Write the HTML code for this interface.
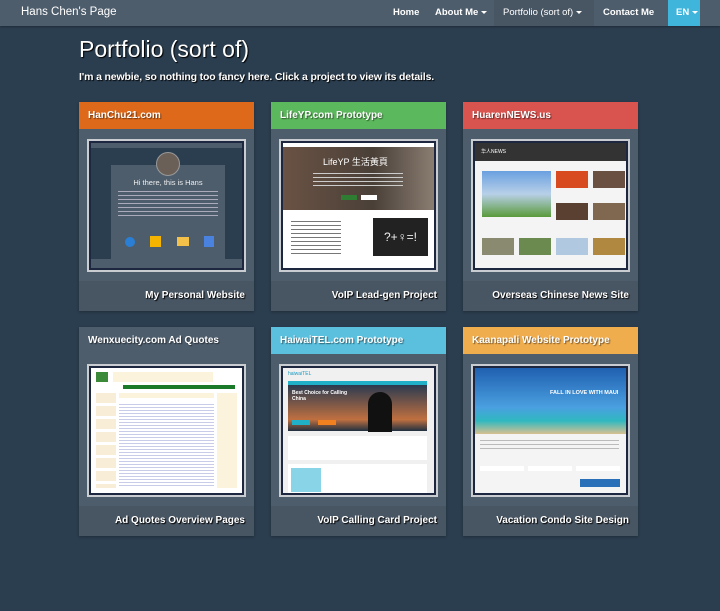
<!DOCTYPE html>
<html><head><meta charset="utf-8">
<style>
*{box-sizing:border-box;margin:0;padding:0}
body{width:720px;height:611px;background:#2b3e50;font-family:"Liberation Sans","Noto Sans CJK SC",sans-serif;color:#ebebeb;position:relative;overflow:hidden}
.nav{position:absolute;left:0;top:0;width:720px;height:26px;background:#4e5d6c;box-shadow:0 1px 2px rgba(0,0,0,.3)}
.brand{position:absolute;left:21px;top:6px;font-size:11.5px;color:#fff}
.ni{position:absolute;top:0;height:26px;line-height:25px;font-size:9.5px;color:#fff;font-weight:bold}
.car{display:inline-block;border-left:3px solid transparent;border-right:3px solid transparent;border-top:3px solid #fff;vertical-align:middle;margin-left:3px}
h1{position:absolute;left:79px;top:36px;font-size:23px;font-weight:normal;color:#fff;text-shadow:1px 1px 1px #000}
.sub{position:absolute;left:79px;top:71px;font-size:10.5px;letter-spacing:-0.15px;font-weight:bold;color:#fff;text-shadow:1px 1px 1px #000}
.card{position:absolute;width:175px;height:209px;background:#4e5d6c;box-shadow:0 1px 3px rgba(0,0,0,.3)}
.hd{height:27px;line-height:27px;padding-left:9px;font-size:10px;font-weight:bold;color:#fff;text-shadow:1px 1px 1px rgba(0,0,0,.5)}
.ft{position:absolute;left:0;bottom:0;width:175px;height:30px;background:#485563;text-align:right;padding-right:9px;line-height:30px;font-size:10px;font-weight:bold;color:#fff;text-shadow:1px 1px 1px #000}
.th{position:absolute;left:8px;top:37px;width:159px;height:133px;border:2px solid #c9cdd2;background:#1d2740;padding:2px;overflow:hidden}
.in{width:100%;height:100%;position:relative;overflow:hidden}
.a{position:absolute}
</style></head><body>
<div class="nav">
<div class="brand">Hans Chen's Page</div>
<div class="ni" style="left:393px">Home</div>
<div class="ni" style="left:435px">About Me<span class="car"></span></div>
<div class="ni" style="left:494px;width:100px;background:#485563;padding-left:9px;font-weight:normal">Portfolio (sort of)<span class="car"></span></div>
<div class="ni" style="left:603px">Contact Me</div>
<div class="ni" style="left:668px;width:32px;background:#3fb5dc;padding-left:8px">EN<span class="car"></span></div>
</div>
<h1>Portfolio (sort of)</h1>
<div class="sub">I'm a newbie, so nothing too fancy here. Click a project to view its details.</div>

<div class="card" style="left:79px;top:102px"><div class="hd" style="background:#df691a">HanChu21.com</div>
<div class="th"><div class="in" style="background:#2b3e50">
<div class="a" style="left:0;top:0;width:100%;height:5px;background:#4e5d6c"></div>
<div class="a" style="left:20px;top:22px;width:114px;height:94px;background:#4e5d6c"></div>
<div class="a" style="left:65px;top:9px;width:24px;height:24px;border-radius:50%;background:#6a6058;border:1px solid #999"></div>
<div class="a" style="left:22px;top:35px;width:110px;text-align:center;font-size:7.5px;color:#eee">Hi there, this is Hans</div>
<div class="a" style="left:27px;top:48px;width:100px;height:28px;background:repeating-linear-gradient(#aab 0 1px,transparent 1px 4px)"></div>
<div class="a" style="left:34px;top:94px;width:10px;height:10px;border-radius:50%;background:#2a7fd4"></div>
<div class="a" style="left:59px;top:93px;width:11px;height:11px;background:#f5b400"></div>
<div class="a" style="left:86px;top:94px;width:12px;height:9px;background:#f3c04a"></div>
<div class="a" style="left:113px;top:93px;width:10px;height:11px;background:#4a82e0"></div>
<div class="a" style="left:0;bottom:0;width:100%;height:9px;background:#4e5d6c"></div>
</div></div>
<div class="ft">My Personal Website</div></div>

<div class="card" style="left:271px;top:102px"><div class="hd" style="background:#5cb85c">LifeYP.com Prototype</div>
<div class="th"><div class="in" style="background:#fff">
<div class="a" style="left:0;top:4px;width:100%;height:63px;background:linear-gradient(90deg,#6a5244,#4a4038 60%,#8a7d72)"></div>
<div class="a" style="left:40px;top:12px;font-size:9px;color:#fff">LifeYP 生活黃頁</div>
<div class="a" style="left:30px;top:30px;width:90px;height:14px;background:repeating-linear-gradient(#ccc 0 1px,transparent 1px 4px)"></div>
<div class="a" style="left:58px;top:52px;width:16px;height:5px;background:#2e7d32"></div>
<div class="a" style="left:78px;top:52px;width:16px;height:5px;background:#fff"></div>
<div class="a" style="left:8px;top:78px;width:50px;height:35px;background:repeating-linear-gradient(#777 0 1px,transparent 1px 4px)"></div>
<div class="a" style="left:90px;top:75px;width:55px;height:38px;background:#222;color:#eee;font-size:12px;text-align:center;line-height:38px">?+♀=!</div>
</div></div>
<div class="ft">VoIP Lead-gen Project</div></div>

<div class="card" style="left:463px;top:102px"><div class="hd" style="background:#d9534f">HuarenNEWS.us</div>
<div class="th"><div class="in" style="background:#f4f4f4">
<div class="a" style="left:0;top:0;width:100%;height:18px;background:#333;color:#fff;font-size:5px;padding:5px 6px">华人NEWS</div>
<div class="a" style="left:7px;top:28px;width:69px;height:46px;background:linear-gradient(#6aa0e0,#b8d0e8 50%,#5a9a3a)"></div>
<div class="a" style="left:81px;top:28px;width:32px;height:17px;background:#d84a20"></div>
<div class="a" style="left:118px;top:28px;width:32px;height:17px;background:#6a5040"></div>
<div class="a" style="left:81px;top:60px;width:32px;height:17px;background:#5a4030"></div>
<div class="a" style="left:118px;top:60px;width:32px;height:17px;background:#806850"></div>
<div class="a" style="left:7px;top:95px;width:32px;height:17px;background:#8a8a70"></div>
<div class="a" style="left:44px;top:95px;width:32px;height:17px;background:#6a8a50"></div>
<div class="a" style="left:81px;top:95px;width:32px;height:17px;background:#b0c8e0"></div>
<div class="a" style="left:118px;top:95px;width:32px;height:17px;background:#b08840"></div>
</div></div>
<div class="ft">Overseas Chinese News Site</div></div>

<div class="card" style="left:79px;top:327px"><div class="hd" style="background:#4e5d6c">Wenxuecity.com Ad Quotes</div>
<div class="th"><div class="in" style="background:#fff">
<div class="a" style="left:22px;top:4px;width:100px;height:10px;background:#fbf3dc"></div>
<div class="a" style="left:5px;top:4px;width:12px;height:10px;background:#3a8a3a"></div>
<div class="a" style="left:32px;top:17px;width:112px;height:4px;background:#1a7a2a"></div>
<div class="a" style="left:5px;top:25px;width:20px;height:95px;background:repeating-linear-gradient(#f8eed8 0 10px,#fff 10px 13px)"></div>
<div class="a" style="left:126px;top:25px;width:20px;height:95px;background:#fbf3dc"></div>
<div class="a" style="left:28px;top:25px;width:95px;height:5px;background:#fbf3dc"></div>
<div class="a" style="left:28px;top:36px;width:95px;height:84px;background:repeating-linear-gradient(#c8cce8 0 1px,transparent 1px 3px)"></div>
</div></div>
<div class="ft">Ad Quotes Overview Pages</div></div>

<div class="card" style="left:271px;top:327px"><div class="hd" style="background:#5bc0de">HaiwaiTEL.com Prototype</div>
<div class="th"><div class="in" style="background:#f0f0f0">
<div class="a" style="left:5px;top:3px;font-size:5px;color:#1a9ac0">haiwaiTEL</div>
<div class="a" style="left:5px;top:13px;width:139px;height:4px;background:#20b0c8"></div>
<div class="a" style="left:5px;top:17px;width:139px;height:46px;background:linear-gradient(#2a3a50,#c07040 75%,#203040)"></div>
<div class="a" style="left:85px;top:24px;width:24px;height:40px;background:#111;border-radius:12px 12px 0 0"></div>
<div class="a" style="left:9px;top:22px;font-size:5px;color:#fff;font-weight:bold;width:55px">Best Choice for Calling China</div>
<div class="a" style="left:9px;top:52px;width:18px;height:5px;background:#20b0c8"></div>
<div class="a" style="left:35px;top:52px;width:18px;height:5px;background:#f08020"></div>
<div class="a" style="left:5px;top:68px;width:139px;height:24px;background:#fff"></div>
<div class="a" style="left:5px;top:96px;width:139px;height:30px;background:#fff"></div>
<div class="a" style="left:8px;top:100px;width:30px;height:24px;background:#8ad4e8"></div>
</div></div>
<div class="ft">VoIP Calling Card Project</div></div>

<div class="card" style="left:463px;top:327px"><div class="hd" style="background:#f0ad4e">Kaanapali Website Prototype</div>
<div class="th"><div class="in" style="background:#f4f4f4">
<div class="a" style="left:0;top:0;width:100%;height:66px;background:linear-gradient(#2060b0,#4aa0e0 60%,#30b8c0 80%,#d8c090)"></div>
<div class="a" style="left:75px;top:22px;font-size:5.5px;color:#fff;font-weight:bold">FALL IN LOVE WITH MAUI</div>
<div class="a" style="left:5px;top:72px;width:139px;height:12px;background:repeating-linear-gradient(#bbb 0 1px,transparent 1px 4px)"></div>
<div class="a" style="left:5px;top:98px;width:140px;height:5px;background:repeating-linear-gradient(90deg,#fff 0 44px,transparent 44px 48px)"></div>
<div class="a" style="left:105px;top:111px;width:40px;height:8px;background:#2a70b8"></div>
</div></div>
<div class="ft">Vacation Condo Site Design</div></div>
</body></html>
